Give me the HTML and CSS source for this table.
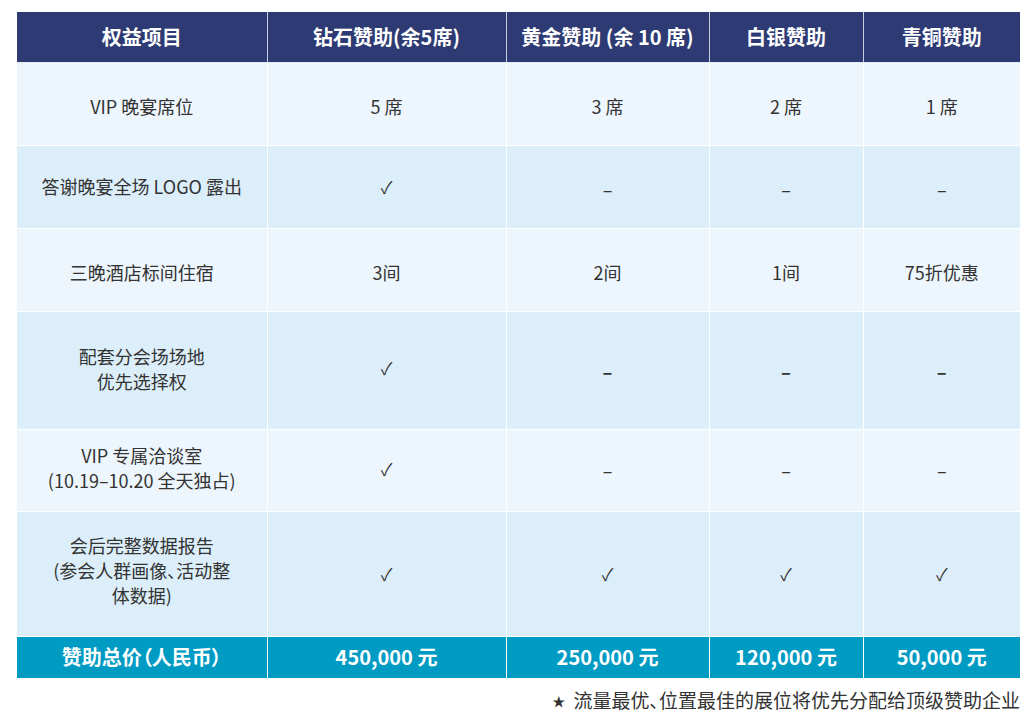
FILE: index.html
```html
<!DOCTYPE html>
<html lang="zh-CN">
<head>
<meta charset="utf-8">
<title>赞助权益</title>
<link rel="stylesheet" href="styles.css">
</head>
<body>
<div class="page">
  <table class="tiers">
    <colgroup>
      <col class="c1"><col class="c2"><col class="c3"><col class="c4"><col class="c5">
    </colgroup>
    <thead>
      <tr class="head">
        <th>权益项目</th>
        <th>钻石赞助(余5席)</th>
        <th>黄金赞助 (余 10 席)</th>
        <th>白银赞助</th>
        <th>青铜赞助</th>
      </tr>
    </thead>
    <tbody>
      <tr class="row light r1">
        <td>VIP 晚宴席位</td>
        <td>5 席</td>
        <td>3 席</td>
        <td>2 席</td>
        <td>1 席</td>
      </tr>
      <tr class="row dark r2">
        <td>答谢晚宴全场 LOGO 露出</td>
        <td class="mark">✓</td>
        <td><span class="dash">–</span></td>
        <td><span class="dash">–</span></td>
        <td><span class="dash">–</span></td>
      </tr>
      <tr class="row light r3">
        <td>三晚酒店标间住宿</td>
        <td>3间</td>
        <td>2间</td>
        <td>1间</td>
        <td>75折优惠</td>
      </tr>
      <tr class="row dark r4">
        <td>配套分会场场地<br>优先选择权</td>
        <td class="mark">✓</td>
        <td><span class="dash bold">–</span></td>
        <td><span class="dash bold">–</span></td>
        <td><span class="dash bold">–</span></td>
      </tr>
      <tr class="row light r5">
        <td>VIP 专属洽谈室<br>(10.19–10.20 全天独占)</td>
        <td class="mark">✓</td>
        <td><span class="dash">–</span></td>
        <td><span class="dash">–</span></td>
        <td><span class="dash">–</span></td>
      </tr>
      <tr class="row dark r6">
        <td class="tight">会后完整数据报告<br>(参会人群画像、活动整<br>体数据)</td>
        <td class="mark">✓</td>
        <td class="mark">✓</td>
        <td class="mark">✓</td>
        <td class="mark">✓</td>
      </tr>
    </tbody>
    <tfoot>
      <tr class="total">
        <td class="tight">赞助总价（人民币）</td>
        <td>450,000 元</td>
        <td>250,000 元</td>
        <td>120,000 元</td>
        <td>50,000 元</td>
      </tr>
    </tfoot>
  </table>
  <p class="note tight"><span class="star">★</span> 流量最优、位置最佳的展位将优先分配给顶级赞助企业</p>
</div>
</body>
</html>
```

FILE: styles.css
```css
html, body {
  margin: 0;
  padding: 0;
  background: #ffffff;
}

body {
  font-family: "Noto Sans CJK SC", "Noto Sans", sans-serif;
  color: #333333;
}

.page {
  padding: 12px 14px 0 17px;
}

.tiers {
  width: 1003px;
  border-collapse: collapse;
  table-layout: fixed;
}

.c1 { width: 250px; }
.c2 { width: 239px; }
.c3 { width: 203px; }
.c4 { width: 154px; }
.c5 { width: 157px; }

.tiers th,
.tiers td {
  border: 1px solid #ffffff;
  text-align: center;
  vertical-align: middle;
  padding: 0;
}

.tiers tr > :first-child { border-left: none; }
.tiers tr > :last-child { border-right: none; }
.tiers thead th { border-top: none; }
.tiers tfoot td { border-bottom: none; }

.tight {
  font-feature-settings: "palt" 1;
}

.head {
  height: 50px;
  background: #2d3a73;
}

.head th {
  color: #ffffff;
  font-size: 20px;
  font-weight: 700;
  line-height: 26px;
  border-left-color: #c9cde0;
  border-right-color: #c9cde0;
  border-bottom-color: #e4ecf6;
}

.row td {
  font-size: 18px;
  line-height: 25px;
  color: #333333;
}

.light { background: #eef6fd; }
.dark { background: #dbeef9; }

.r1 { height: 83px; }
.r2 { height: 83px; }
.r3 { height: 83px; }
.r4 { height: 118px; }
.r5 { height: 82px; }
.r6 { height: 125px; }

.r1 td { padding-top: 6px; }
.r3 td { padding-top: 5px; }
.r4 td { padding-bottom: 2px; }
.r5 td { padding-bottom: 4px; }
.r6 td { padding-bottom: 6px; }

.row td.mark {
  font-size: 17px;
}

.r4 td.mark { padding-bottom: 6px; }
.r6 td.mark { padding-bottom: 0; }

.dash {
  display: inline-block;
  font-size: 18px;
  vertical-align: -5px;
}

.dash.bold {
  font-weight: 700;
}

.total {
  height: 42px;
  background: #009bc3;
}

.total td {
  color: #ffffff;
  font-size: 20px;
  font-weight: 700;
  line-height: 26px;
}

.note {
  margin: 9px 0 0 0;
  text-align: right;
  font-size: 19px;
  line-height: 26px;
  color: #333333;
}

.star {
  font-size: 13px;
  vertical-align: 2px;
  margin-right: 4px;
}
```
